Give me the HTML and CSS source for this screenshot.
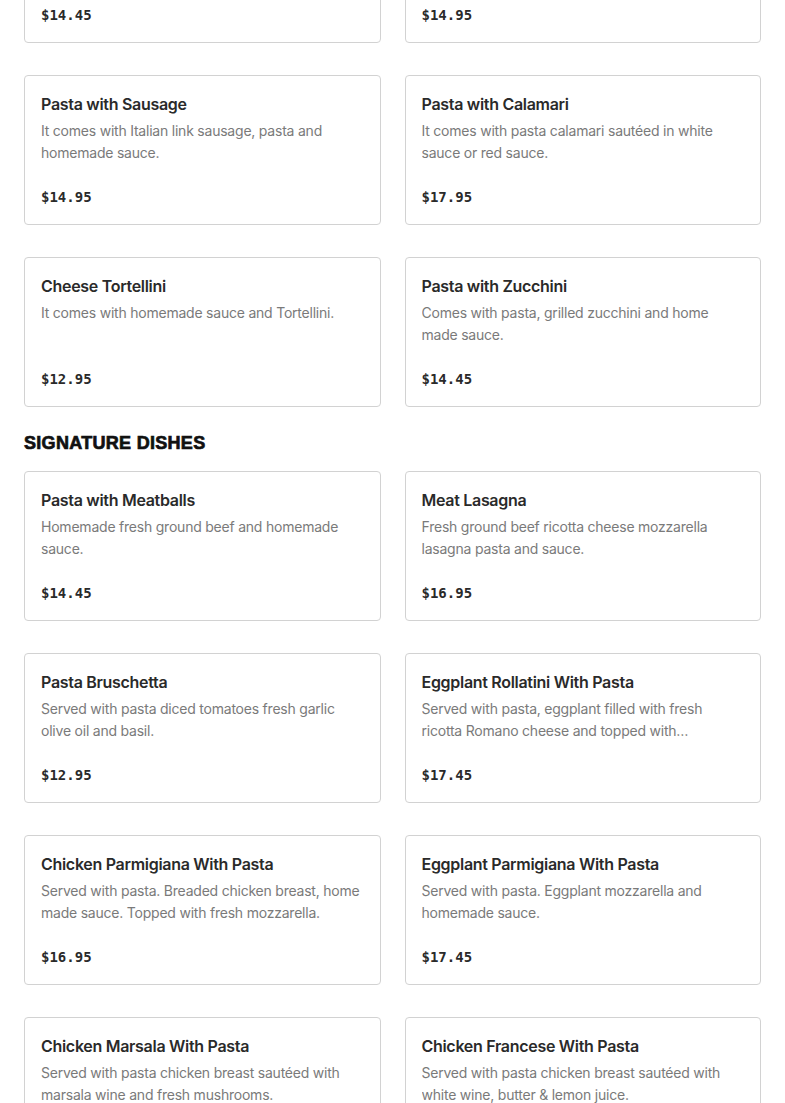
FILE: index.html
```html
<!DOCTYPE html>
<html lang="en">
<head>
<meta charset="utf-8">
<title>Menu</title>
<link rel="stylesheet" href="styles.css">
</head>
<body>
<main class="menu">
  <section class="section">
    <div class="grid">
      <article class="card"><h3 class="name">Pasta Primavera</h3><p class="desc">It comes with pasta and fresh vegetables in homemade sauce.</p><div class="price">$14.45</div></article>
      <article class="card"><h3 class="name">Pasta with Shrimp</h3><p class="desc">It comes with pasta and shrimp in white sauce or red sauce.</p><div class="price">$14.95</div></article>
      <article class="card"><h3 class="name">Pasta with Sausage</h3><p class="desc">It comes with Italian link sausage, pasta and homemade sauce.</p><div class="price">$14.95</div></article>
      <article class="card"><h3 class="name">Pasta with Calamari</h3><p class="desc">It comes with pasta calamari sautéed in white sauce or red sauce.</p><div class="price">$17.95</div></article>
      <article class="card"><h3 class="name">Cheese Tortellini</h3><p class="desc">It comes with homemade sauce and Tortellini.</p><div class="price">$12.95</div></article>
      <article class="card"><h3 class="name">Pasta with Zucchini</h3><p class="desc">Comes with pasta, grilled zucchini and home made sauce.</p><div class="price">$14.45</div></article>
    </div>
  </section>
  <section class="section">
    <h2 class="section-title">SIGNATURE DISHES</h2>
    <div class="grid">
      <article class="card"><h3 class="name">Pasta with Meatballs</h3><p class="desc">Homemade fresh ground beef and homemade sauce.</p><div class="price">$14.45</div></article>
      <article class="card"><h3 class="name">Meat Lasagna</h3><p class="desc">Fresh ground beef ricotta cheese mozzarella lasagna pasta and sauce.</p><div class="price">$16.95</div></article>
      <article class="card"><h3 class="name">Pasta Bruschetta</h3><p class="desc">Served with pasta diced tomatoes fresh garlic olive oil and basil.</p><div class="price">$12.95</div></article>
      <article class="card"><h3 class="name">Eggplant Rollatini With Pasta</h3><p class="desc">Served with pasta, eggplant filled with fresh ricotta Romano cheese and topped with mozzarella and homemade sauce.</p><div class="price">$17.45</div></article>
      <article class="card"><h3 class="name">Chicken Parmigiana With Pasta</h3><p class="desc">Served with pasta. Breaded chicken breast, home made sauce. Topped with fresh mozzarella.</p><div class="price">$16.95</div></article>
      <article class="card"><h3 class="name">Eggplant Parmigiana With Pasta</h3><p class="desc">Served with pasta. Eggplant mozzarella and homemade sauce.</p><div class="price">$17.45</div></article>
      <article class="card"><h3 class="name">Chicken Marsala With Pasta</h3><p class="desc">Served with pasta chicken breast sautéed with marsala wine and fresh mushrooms.</p><div class="price">$16.95</div></article>
      <article class="card"><h3 class="name">Chicken Francese With Pasta</h3><p class="desc">Served with pasta chicken breast sautéed with white wine, butter &amp; lemon juice.</p><div class="price">$16.95</div></article>
    </div>
  </section>
</main>
</body>
</html>
```
FILE: styles.css
```css
html, body {
  margin: 0;
  padding: 0;
  background: #ffffff;
}
body {
  font-family: Inter, "Noto Sans", sans-serif;
  color: #292929;
  overflow: hidden;
}
.menu {
  padding: 0 24px;
  margin-top: -107px;
}
.section-title {
  margin: 28px 0 20px;
  font-family: "Liberation Sans", Arial, sans-serif;
  font-weight: 900;
  font-size: 18px;
  line-height: 16px;
  letter-spacing: 0.3px;
  color: #111111;
  -webkit-text-stroke: 0.7px #111111;
}
.grid {
  display: grid;
  grid-template-columns: 1fr 1fr;
  column-gap: 24px;
  row-gap: 32px;
}
.card {
  border: 1px solid #d2d2d2;
  border-radius: 4px;
  padding: 16px;
  height: 150px;
  box-sizing: border-box;
}
.name {
  margin: 0;
  font-size: 16px;
  line-height: 24px;
  font-weight: 600;
  letter-spacing: -0.3px;
  color: #2a2a2a;
}
.desc {
  margin: 4px 0 0;
  font-size: 14px;
  line-height: 22px;
  letter-spacing: -0.22px;
  color: #7a7a7a;
  height: 44px;
  display: -webkit-box;
  -webkit-line-clamp: 2;
  -webkit-box-orient: vertical;
  overflow: hidden;
}
.price {
  margin-top: 22px;
  font-family: "DejaVu Sans Mono", "Liberation Mono", monospace;
  font-weight: 700;
  font-size: 14px;
  line-height: 22px;
  color: #2a2a2a;
}
```
